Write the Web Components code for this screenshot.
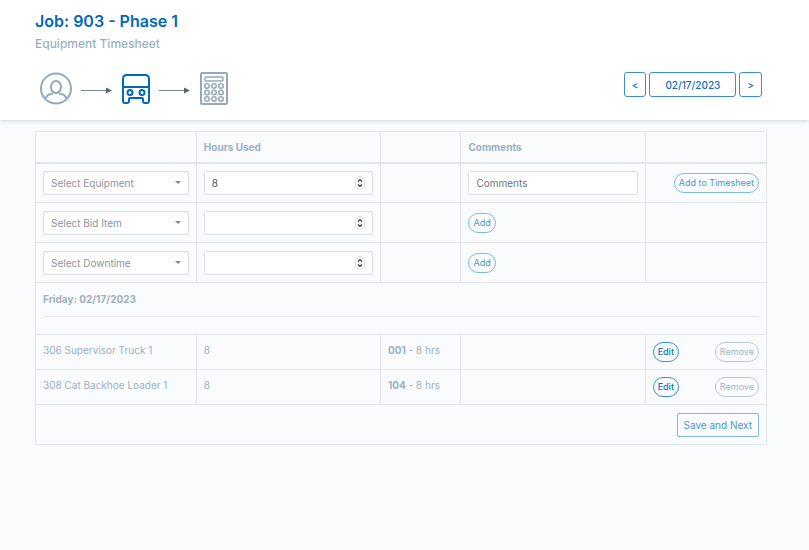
<!DOCTYPE html>
<html lang="en">
<head>
<meta charset="utf-8">
<meta name="viewport" content="width=device-width, initial-scale=1">
<title>Equipment Timesheet</title>
<style>
    body {
        margin: 0;
        min-height: 100vh;
        background: #fafbfd;
        color: #9ab0c2;
        font: 10px/16px Inter, "Liberation Sans", sans-serif;
    }
</style>
</head>
<body>
<timesheet-app></timesheet-app>

<script>
class PageHeader extends HTMLElement {
    constructor() {
        super();
        this.attachShadow({ mode: 'open' });
    }

    connectedCallback() {
        this.shadowRoot.innerHTML = `
            <style>
                :host {
                    display: block;
                    padding: 10px 46px 14px 35px;
                    background: #fff;
                    box-shadow: 0 1px 4px rgba(40, 60, 80, 0.2);
                }
                h1 {
                    margin: 0;
                    color: #0069bd;
                    font-size: 16px;
                    font-weight: 600;
                    line-height: 22px;
                }
                h2 {
                    margin: 0;
                    font-size: 12px;
                    font-weight: 500;
                    line-height: 24px;
                }
                .bar {
                    display: flex;
                    justify-content: space-between;
                    align-items: flex-start;
                    margin-top: 15px;
                }
            </style>
            <h1><slot name="title"></slot></h1>
            <h2><slot name="subtitle"></slot></h2>
            <div class="bar"><slot></slot></div>
        `;
    }
}

class StepTrail extends HTMLElement {
    constructor() {
        super();
        this.attachShadow({ mode: 'open' });
    }

    connectedCallback() {
        const arrow = `
            <svg class="arrow" width="32" height="8" viewBox="0 0 32 8" aria-hidden="true">
                <path class="shaft" d="M0 4.500h26"/>
                <path class="head" d="M25 1.500l6 3-6 3z"/>
            </svg>`;

        this.shadowRoot.innerHTML = `
            <style>
                :host {
                    display: flex;
                    align-items: center;
                    gap: 8px;
                    margin-left: 4px;
                    padding-top: 1px;
                }
                svg {
                    display: block;
                    fill: none;
                    stroke: #94a9be;
                    stroke-width: 2;
                }
                .arrow {
                    margin-top: 2px;
                }
                .shaft {
                    stroke: #7b8790;
                    stroke-width: 1;
                }
                .head {
                    fill: #5a6771;
                    stroke: none;
                }
                .active {
                    stroke: #0069bd;
                }
            </style>
            <svg width="34" height="34" viewBox="0 0 34 34" role="img" aria-label="Employee">
                <circle cx="17" cy="16.500" r="15"/>
                <ellipse cx="17" cy="15" rx="5" ry="6"/>
                <path d="M6 27c2-4 5-5.500 8-5.500M28 27c-2-4-5-5.500-8-5.500"/>
            </svg>
            ${arrow}
            <svg class="active" width="30" height="34" viewBox="0 0 30 34" role="img" aria-label="Equipment">
                <path d="M6 3h18q4 0 4 4v22q0 2-2 2h-2q-2 0-2-2v-2q0-1-1-1H9q-1 0-1 1v2q0 2-2 2H4q-2 0-2-2V7q0-4 4-4zM2 15h26"/>
                <circle cx="9" cy="20.500" r="2.500"/>
                <circle cx="21" cy="20.500" r="2.500"/>
            </svg>
            ${arrow}
            <svg width="30" height="34" viewBox="0 0 30 34" role="img" aria-label="Summary">
                <rect x="2" y="1" width="26" height="31" rx="1"/>
                <rect x="6" y="5" width="18" height="4" rx="1" stroke-width="1.500"/>
                <g stroke-width="1.600">
                    <circle cx="8" cy="14" r="2.200"/><circle cx="15" cy="14" r="2.200"/><circle cx="22" cy="14" r="2.200"/>
                    <circle cx="8" cy="20.500" r="2.200"/><circle cx="15" cy="20.500" r="2.200"/><circle cx="22" cy="20.500" r="2.200"/>
                    <circle cx="8" cy="27" r="2.200"/><circle cx="15" cy="27" r="2.200"/><circle cx="22" cy="27" r="2.200"/>
                </g>
            </svg>
        `;
    }
}

class DateSwitcher extends HTMLElement {
    constructor() {
        super();
        this.attachShadow({ mode: 'open' });
    }

    connectedCallback() {
        this.shadowRoot.innerHTML = `
            <style>
                :host {
                    display: flex;
                    gap: 3px;
                    padding: 1px;
                }
                button {
                    height: 25px;
                    padding: 0 7px;
                    border: 1px solid #3790d3;
                    border-radius: 3px;
                    background: #fff;
                    color: #0b70c0;
                    font: 500 10px/16px Inter, "Liberation Sans", sans-serif;
                }
                .date {
                    padding: 0 15px;
                }
            </style>
            <button type="button" aria-label="Previous day">&lt;</button>
            <button type="button" class="date"><slot></slot></button>
            <button type="button" aria-label="Next day">&gt;</button>
        `;
    }
}

class ActionButton extends HTMLElement {
    constructor() {
        super();
        this.attachShadow({ mode: 'open' });
    }

    connectedCallback() {
        this.shadowRoot.innerHTML = `
            <style>
                :host {
                    display: block;
                    --line: #7db9e3;
                    --ink: #4599d6;
                }
                :host([kind="strong"]) {
                    --line: #3790d3;
                    --ink: #0b70c0;
                }
                :host([kind="muted"]) {
                    --line: #b9c7d3;
                    --ink: #a3b4c3;
                }
                button {
                    display: block;
                    height: 20px;
                    padding: 0 4px;
                    border: 1px solid var(--line);
                    border-radius: 10px;
                    background: transparent;
                    color: var(--ink);
                    font: 9px/16px Inter, "Liberation Sans", sans-serif;
                }
                :host([kind="strong"]) button {
                    font-weight: 500;
                }
                :host([size="large"]) button {
                    height: 24px;
                    padding: 0 6px;
                    border-radius: 2px;
                    font-size: 10px;
                }
            </style>
            <button type="button"><slot></slot></button>
        `;
    }
}

class SelectField extends HTMLElement {
    constructor() {
        super();
        this.attachShadow({ mode: 'open' });
    }

    connectedCallback() {
        const label = this.getAttribute('label');
        this.shadowRoot.innerHTML = `
            <style>
                :host {
                    display: grid;
                    align-items: center;
                }
                select, svg {
                    grid-area: 1 / 1;
                }
                select {
                    appearance: none;
                    box-sizing: border-box;
                    width: 100%;
                    height: 24px;
                    padding: 0 20px 0 7px;
                    border: 1px solid #dae0e5;
                    border-radius: 2px;
                    background: #fff;
                    color: #8f9396;
                    font: 10px/16px Inter, "Liberation Sans", sans-serif;
                }
                svg {
                    justify-self: end;
                    margin-right: 8px;
                    pointer-events: none;
                }
            </style>
            <select aria-label="${label}"><option>${label}</option></select>
            <svg width="6" height="4" viewBox="0 0 6 4" aria-hidden="true"><path d="M0 0h6L3 3z" fill="#888"/></svg>
        `;
    }
}

class TextField extends HTMLElement {
    constructor() {
        super();
        this.attachShadow({ mode: 'open' });
    }

    connectedCallback() {
        const type = this.getAttribute('type') || 'text';
        const value = this.getAttribute('value') || '';
        const label = this.getAttribute('label');
        const stepper = type !== 'number' ? '' : `
            <svg width="10" height="14" viewBox="0 0 10 14" aria-hidden="true">
                <rect x="0.500" y="0.500" width="9" height="13" rx="4.500" fill="#fafafa" stroke="#dedede"/>
                <path d="M3 5.500L5 3.500l2 2M3 8.500l2 2 2-2" fill="none" stroke="#333" stroke-width="1.200"/>
            </svg>`;

        this.shadowRoot.innerHTML = `
            <style>
                :host {
                    display: grid;
                    align-items: center;
                }
                input, svg {
                    grid-area: 1 / 1;
                }
                input {
                    appearance: none;
                    box-sizing: border-box;
                    width: 100%;
                    height: 24px;
                    padding: 0 7px;
                    border: 1px solid #dae0e5;
                    border-radius: 2px;
                    background: #fff;
                    color: #495057;
                    font: 10px/16px Inter, "Liberation Sans", sans-serif;
                }
                input::placeholder {
                    color: #6c757d;
                }
                input[type="number"] {
                    appearance: textfield;
                }
                svg {
                    justify-self: end;
                    margin-right: 8px;
                    pointer-events: none;
                }
            </style>
            <input type="${type}" value="${value}" aria-label="${label}"
                placeholder="${this.getAttribute('placeholder') || ''}">
            ${stepper}
        `;
    }
}

class TimesheetTable extends HTMLElement {
    constructor() {
        super();
        this.attachShadow({ mode: 'open' });
        this.entries = [
            { name: '306 Supervisor Truck 1', hours: 8, code: '001' },
            { name: '308 Cat Backhoe Loader 1', hours: 8, code: '104' }
        ];
    }

    connectedCallback() {
        this.render();
    }

    renderEntry(entry) {
        return `
            <tr class="entry">
                <td>${entry.name}</td>
                <td>${entry.hours}</td>
                <td><b>${entry.code}</b> - ${entry.hours} hrs</td>
                <td></td>
                <td><div class="actions">
                    <action-button kind="strong">Edit</action-button>
                    <action-button kind="muted">Remove</action-button>
                </div></td>
            </tr>`;
    }

    render() {
        this.shadowRoot.innerHTML = `
            <style>
                :host {
                    display: block;
                    padding: 11px 42px 20px 35px;
                }
                table {
                    width: 100%;
                    table-layout: fixed;
                    border-collapse: collapse;
                    border: 1px solid #e1e5e9;
                    font-size: 10px;
                    line-height: 16px;
                }
                .item { width: 22%; }
                .hours, .comments { width: 25.2%; }
                .code { width: 11%; }
                th, td {
                    box-sizing: border-box;
                    padding: 0 7px;
                    border: 1px solid #e1e5e9;
                    text-align: left;
                    vertical-align: middle;
                }
                th {
                    height: 31px;
                    border-bottom: 2px solid #e1e5e9;
                    font-weight: 700;
                }
                .form td {
                    height: 40px;
                }
                .day td {
                    height: 52px;
                    padding-top: 8px;
                    vertical-align: top;
                    font-weight: 700;
                }
                hr {
                    margin: 9px 0 0;
                    border: 0;
                    border-top: 1px solid #e9ecef;
                }
                .entry td {
                    height: 35px;
                    padding-top: 7px;
                    vertical-align: top;
                }
                b {
                    font-weight: 700;
                }
                .actions {
                    display: flex;
                    justify-content: space-between;
                }
                .start {
                    display: flex;
                }
                .end {
                    display: flex;
                    justify-content: flex-end;
                }
            </style>
            <table>
                <colgroup>
                    <col class="item"><col class="hours"><col class="code"><col class="comments"><col>
                </colgroup>
                <thead>
                    <tr><th></th><th>Hours Used</th><th></th><th>Comments</th><th></th></tr>
                </thead>
                <tbody>
                    <tr class="form">
                        <td><select-field label="Select Equipment"></select-field></td>
                        <td><text-field type="number" value="8" label="Equipment hours"></text-field></td>
                        <td></td>
                        <td><text-field label="Comments" placeholder="Comments"></text-field></td>
                        <td><div class="end"><action-button>Add to Timesheet</action-button></div></td>
                    </tr>
                    <tr class="form">
                        <td><select-field label="Select Bid Item"></select-field></td>
                        <td><text-field type="number" label="Bid item hours"></text-field></td>
                        <td></td>
                        <td><div class="start"><action-button>Add</action-button></div></td>
                        <td></td>
                    </tr>
                    <tr class="form">
                        <td><select-field label="Select Downtime"></select-field></td>
                        <td><text-field type="number" label="Downtime hours"></text-field></td>
                        <td></td>
                        <td><div class="start"><action-button>Add</action-button></div></td>
                        <td></td>
                    </tr>
                    <tr class="day">
                        <td colspan="5">Friday: 02/17/2023<hr></td>
                    </tr>
                    ${this.entries.map((entry) => this.renderEntry(entry)).join('')}
                    <tr class="form">
                        <td colspan="5"><div class="end"><action-button size="large">Save and Next</action-button></div></td>
                    </tr>
                </tbody>
            </table>
        `;
    }
}

class TimesheetApp extends HTMLElement {
    constructor() {
        super();
        this.attachShadow({ mode: 'open' });
    }

    connectedCallback() {
        this.shadowRoot.innerHTML = `
            <style>
                :host {
                    display: block;
                }
            </style>
            <page-header>
                <span slot="title">Job: 903 - Phase 1</span>
                <span slot="subtitle">Equipment Timesheet</span>
                <step-trail></step-trail>
                <date-switcher>02/17/2023</date-switcher>
            </page-header>
            <timesheet-table></timesheet-table>
        `;
    }
}

customElements.define('page-header', PageHeader);
customElements.define('step-trail', StepTrail);
customElements.define('date-switcher', DateSwitcher);
customElements.define('action-button', ActionButton);
customElements.define('select-field', SelectField);
customElements.define('text-field', TextField);
customElements.define('timesheet-table', TimesheetTable);
customElements.define('timesheet-app', TimesheetApp);
</script>
</body>
</html>
